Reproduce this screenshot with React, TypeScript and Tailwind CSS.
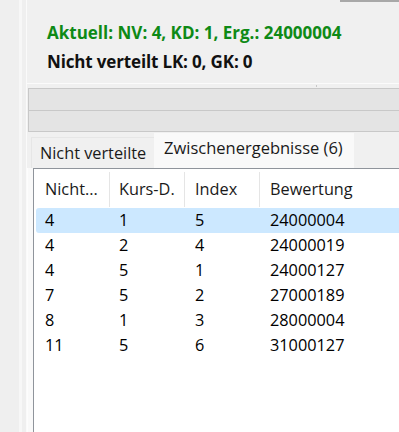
import React from "react";

const rows = [
  ["4", "1", "5", "24000004"],
  ["4", "2", "4", "24000019"],
  ["4", "5", "1", "24000127"],
  ["7", "5", "2", "27000189"],
  ["8", "1", "3", "28000004"],
  ["11", "5", "6", "31000127"],
];

export default function App() {
  const font = { fontFamily: '"Open Sans", "Noto Sans", sans-serif' };
  return (
    <div
      className="w-[399px] h-[432px] bg-[#f0f0f0] flex overflow-hidden text-[#000]"
      style={font}
    >
      {/* left strips */}
      <div className="flex h-full shrink-0">
        <div className="w-[19px] bg-[#efefef]" />
        <div className="w-[3px] bg-[#f7f7f7]" />
        <div className="w-[4px] bg-[#efefef]" />
        <div className="w-[1px] bg-[#fafafa]" />
      </div>

      <div className="flex-1 flex flex-col min-w-0">
        {/* top area */}
        <div className="relative h-[84px] border-b border-[#fbfbfb] bg-[#f0f0f0] shrink-0">
          <div className="absolute right-0 top-0 w-[59px] h-[2px] bg-[#a8a8a8]" />
          <div className="pl-[20px] pt-[21px] flex flex-col">
            <div className="h-[24px] leading-[24px] text-[17px] font-bold text-[#0e8a16] whitespace-nowrap">
              Aktuell: NV: 4, KD: 1, Erg.: 24000004
            </div>
            <div className="h-[24px] leading-[24px] mt-[5px] text-[17px] font-bold text-[#111] tracking-[-0.15px] whitespace-nowrap">
              Nicht verteilt LK: 0, GK: 0
            </div>
          </div>
        </div>
        {/* gap with tick */}
        <div className="relative h-[4px] shrink-0">
          <div className="absolute left-[289px] top-[1px] w-[1px] h-[2px] bg-[#c8c8c8]" />
        </div>
        {/* bars */}
        <div className="h-[22px] shrink-0 bg-[#e4e4e4] border-t border-l border-[#c8c8c8] ml-[1px]" />
        <div className="h-[22px] shrink-0 bg-[#e4e4e4] border-t border-l border-b border-[#c8c8c8] ml-[1px]" />

        {/* tabs */}
        <div className="h-[36px] shrink-0 flex items-end pl-[4px]">
          <div className="w-[123px] h-[31px] bg-[#f0f0f0] border-t border-l border-[#e6e6e6] flex items-center pl-[8px] text-[16.3px] text-[#1a1a1a] whitespace-nowrap">
            Nicht verteilte
          </div>
          <div className="w-[200px] h-[35px] bg-[#f9f9f9] flex items-start pt-[3px] pl-[10px] text-[16.5px] text-[#1a1a1a] whitespace-nowrap">
            Zwischenergebnisse (6)
          </div>
        </div>

        {/* tab page */}
        <div className="flex-1 bg-[#f9f9f9] border-l border-[#fdfdfd] pl-[5px] flex min-h-0">
          <div className="flex-1 bg-white border-t border-l border-[#8f949b] flex flex-col min-w-0">
            {/* header */}
            <div className="h-[39px] flex items-stretch pt-[2px] text-[16.3px] text-[#1a1a1a] shrink-0">
              <div className="w-[76px] pl-[11px] flex items-center border-r border-[#e5e5e5] my-[1px] whitespace-nowrap">
                Nicht...
              </div>
              <div className="w-[75px] pl-[9px] flex items-center border-r border-[#e5e5e5] my-[1px] whitespace-nowrap">
                Kurs-D.
              </div>
              <div className="w-[75px] pl-[10px] flex items-center border-r border-[#e5e5e5] my-[1px] whitespace-nowrap">
                Index
              </div>
              <div className="flex-1 pl-[10px] flex items-center whitespace-nowrap">
                Bewertung
              </div>
            </div>
            {/* rows */}
            <div className="flex flex-col pl-[2px]">
              {rows.map((r, i) => (
                <div
                  key={i}
                  className={
                    i === 0
                      ? "h-[25px] flex items-center text-[16.3px] bg-[#cce8ff] rounded-l-[3px]"
                      : "h-[25px] flex items-center text-[16.3px]"
                  }
                >
                  <div className="w-[74px] pl-[9px]">{r[0]}</div>
                  <div className="w-[75px] pl-[9px]">{r[1]}</div>
                  <div className="w-[75px] pl-[10px]">{r[2]}</div>
                  <div className="flex-1 pl-[10px]">{r[3]}</div>
                </div>
              ))}
            </div>
          </div>
        </div>
      </div>
    </div>
  );
}
